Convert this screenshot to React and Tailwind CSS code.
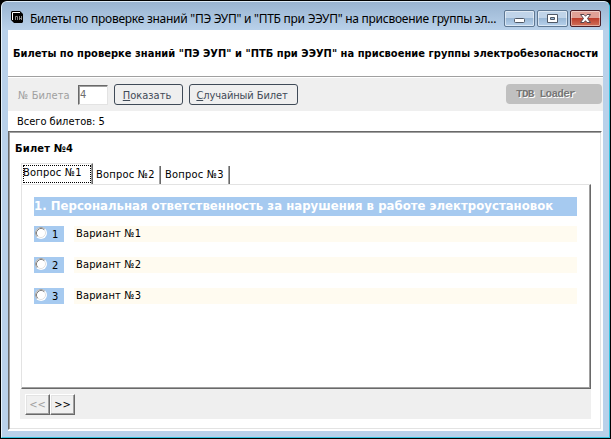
import React from "react";

const TAHOMA = "font-['DejaVu_Sans_Condensed','DejaVu_Sans',sans-serif] [font-stretch:condensed]";

function AppIcon() {
  return (
    <svg width="12" height="12" viewBox="0 0 12 12" className="block">
      <path d="M1 0h8l3 3v8l-1 1H3L0 9V1z" fill="#000" />
      <path d="M1.500 9V1.500h7.500" stroke="#fff" fill="none" />
      <path d="M4.500 9V5.500h2V9M8.500 5v4M8.500 7.500h2M10.500 5v4" stroke="#aaa" strokeWidth=".8" fill="none" />
    </svg>
  );
}

function CaptionButton({ kind }) {
  const close = kind === "close";
  return (
    <div
      className={
        close
          ? "h-[17px] w-[31px] rounded-[2px] border border-[#4b1f28] bg-linear-to-b from-[#e0a096] from-45% via-[#bd3e2d] via-50% to-[#d0705a] shadow-[inset_0_0_0_1px_#ffffff70]"
          : "h-[17px] w-[31px] rounded-[2px] border border-[#5f7893] bg-linear-to-b from-[#c0d4e9] from-45% via-[#9ab8d6] via-50% to-[#b8d2ec] shadow-[inset_0_0_0_1px_#ffffff80]"
      }
    >
      <svg width="29" height="15" viewBox="0 0 29 15" className="block">
        {kind === "min" && <rect x="9.500" y="7.500" width="10" height="4" rx="1" fill="#fff" stroke="#4f5866" />}
        {kind === "max" && (
          <path d="M9.500 3.500h10v8h-10zM12.500 6.500h4v2h-4z" fill="#fff" fillRule="evenodd" stroke="#4f5866" />
        )}
        {close && (
          <path
            d="M9.500 3.500h3.500l1.500 1.800L16 3.500h3.500L16.500 7.500l3 4H16l-1.500-1.800-1.500 1.800H9.500l3-4z"
            fill="#fff"
            stroke="#57444c"
          />
        )}
      </svg>
    </div>
  );
}

function Radio() {
  return (
    <svg width="12" height="12" viewBox="0 0 12 12" className="block">
      <circle cx="6" cy="6" r="6" fill="#fff" />
      <path d="M2.110 9.890A5.500 5.500 0 0 1 9.890 2.110" fill="none" stroke="#a0a0a0" />
      <path d="M2.820 9.180A4.500 4.500 0 0 1 9.180 2.820" fill="none" stroke="#808080" />
      <path d="M2.820 9.180A4.500 4.500 0 0 0 9.180 2.820" fill="none" stroke="#e3e3e3" />
    </svg>
  );
}

function Answer({ n }) {
  return (
    <div className="mb-[15px] flex h-4">
      <div className="flex w-[30px] bg-[#a6caf0] pl-px">
        <div className="mt-px w-[17px]"><Radio /></div>
        <span className="pt-px leading-4">{n}</span>
      </div>
      <div className="ml-[10px] flex-1 bg-[#fffbf0] pl-[2px] leading-[15px] tracking-[0.15px]">Вариант №{n}</div>
    </div>
  );
}

function NavButton({ children, disabled }) {
  return (
    <button
      className={
        "h-[21px] w-[25px] border border-t-white border-l-white border-r-[#696969] border-b-[#696969] bg-[#f0f0f0] text-[11px] leading-[19px] shadow-[inset_-1px_-1px_#a0a0a0,inset_1px_1px_#e3e3e3] " +
        (disabled ? "text-[#a0a0a0]" : "text-black")
      }
    >
      {children}
    </button>
  );
}

export default function App() {
  return (
    <div className={"flex h-[439px] w-[611px] overflow-hidden bg-black pt-px pl-px text-[11px] whitespace-nowrap text-black " + TAHOMA}>
      <div className="flex h-[437px] w-[609px] flex-col rounded-t-[6px] border border-[#35c3e0] border-t-[#dceaf6] border-l-[#e6f2fb] bg-[#b9d1ea] px-[6px] pb-[6px]">
        <div className="-mx-[6px] flex h-[28px] shrink-0 rounded-t-[5px] bg-linear-to-b from-[#99b4d1] to-[#b9d1ea] pl-[9px]">
          <div className="mt-[9px] w-[19px]"><AppIcon /></div>
          <div className="w-[474px] pt-[8px] font-['Noto_Sans',sans-serif] text-[12px] leading-[18px] tracking-[-0.265px] [font-stretch:normal]">
            Билеты по проверке знаний "ПЭ ЭУП" и "ПТБ при ЭЭУП" на присвоение группы эл...
          </div>
          <div className="mt-[8px] flex gap-[2px]">
            <CaptionButton kind="min" />
            <CaptionButton kind="max" />
            <CaptionButton kind="close" />
          </div>
        </div>
        <main className="flex h-[401px] w-[595px] shrink-0 flex-col bg-white">
          <h1 className="h-[47px] border-b border-[#a0a0a0] pl-[5px] text-[11px] leading-[47px] font-bold tracking-[0.04px]">
            Билеты по проверке знаний "ПЭ ЭУП" и "ПТБ при ЭЭУП" на присвоение группы электробезопасности
          </h1>
          <div className="mt-px flex h-[33px] shrink-0 bg-[#efefef] pl-[10px] text-[#3f4a57]">
            <span className="w-[60px] pt-[10px] leading-4 tracking-[0.1px] text-[#a0a0a0]">№ Билета</span>
            <div className="mt-[7px] h-5 w-[30px] border border-[#e3e3e3] border-t-[#696969] border-l-[#696969] bg-white pl-px leading-[17px] text-[#6d6d6d] shadow-[inset_1px_1px_#a0a0a0]">4</div>
            <button className="mt-[6px] ml-[6px] h-[21px] w-[69px] rounded-[3px] border border-[#3f4a57] pt-[2px] pr-[3px] leading-[17px]">
              <u>П</u>оказать
            </button>
            <button className="mt-[6px] ml-[6px] h-[21px] w-[109px] rounded-[3px] border border-[#3f4a57] pt-[2px] pr-[3px] leading-[17px] tracking-[-0.1px]">
              <u>С</u>лучайный Билет
            </button>
            <div className="mt-[6px] ml-[208px] h-5 w-[96px] rounded-[4px] bg-[#c0c0c0] pl-[10px] font-['Liberation_Mono',monospace] text-[11px] leading-[21px] font-bold tracking-[-0.7px] text-[#777] [text-shadow:1px_1px_#fff] [font-stretch:normal]">TDB Loader</div>
          </div>
          <div className="h-5 shrink-0 pl-[9px] leading-[22px] tracking-[-0.02px]">Всего билетов: 5</div>
          <section className="h-[299px] w-[594px] shrink-0 border border-t-[#696969] border-l-[#696969] border-r-white border-b-white shadow-[inset_1px_1px_#a0a0a0,inset_-1px_-1px_#e3e3e3]">
            <h2 className="h-[31px] pt-[9px] pl-[6px] text-[11px] leading-[15px] font-bold tracking-[0.2px]">Билет №4</h2>
            <div className="ml-[12px] flex h-[21px] items-end tracking-[0.2px]">
              <div className="h-[21px] w-[72px] border-t border-l border-[#e3e3e3] border-r border-r-[#696969] pt-px pl-px shadow-[inset_-1px_0_#a0a0a0]">
                <div className="h-[18px] w-[68px] border border-dotted border-black leading-[14px] -indent-px">Вопрос №1</div>
              </div>
              <div className="h-[18px] w-[68px] border-r border-[#696969] pl-[3px] leading-[17px] shadow-[inset_-1px_0_#a0a0a0]">Вопрос №2</div>
              <div className="h-[18px] w-[69px] border-r border-[#696969] pl-[4px] leading-[17px] shadow-[inset_-1px_0_#a0a0a0]">Вопрос №3</div>
            </div>
            <div className="ml-[12px] h-[205px] w-[570px] border border-t-[#e3e3e3] border-l-[#e3e3e3] border-r-[#696969] border-b-[#696969] pt-[12px] pr-[13px] pl-[12px] shadow-[inset_-1px_-1px_#a0a0a0]">
              <div className="mb-[10px] h-[19px] bg-[#a6caf0] text-[13px] leading-[17px] font-bold tracking-[0.025px] text-white">
                1. Персональная ответственность за нарушения в работе электроустановок
              </div>
              <Answer n={1} />
              <Answer n={2} />
              <Answer n={3} />
            </div>
            <div className="ml-[11px] flex h-[30px] w-[571px] bg-[#efefef] pt-[5px] pl-[5px]">
              <NavButton disabled>{"<<"}</NavButton>
              <NavButton>{">>"}</NavButton>
            </div>
          </section>
        </main>
      </div>
    </div>
  );
}
